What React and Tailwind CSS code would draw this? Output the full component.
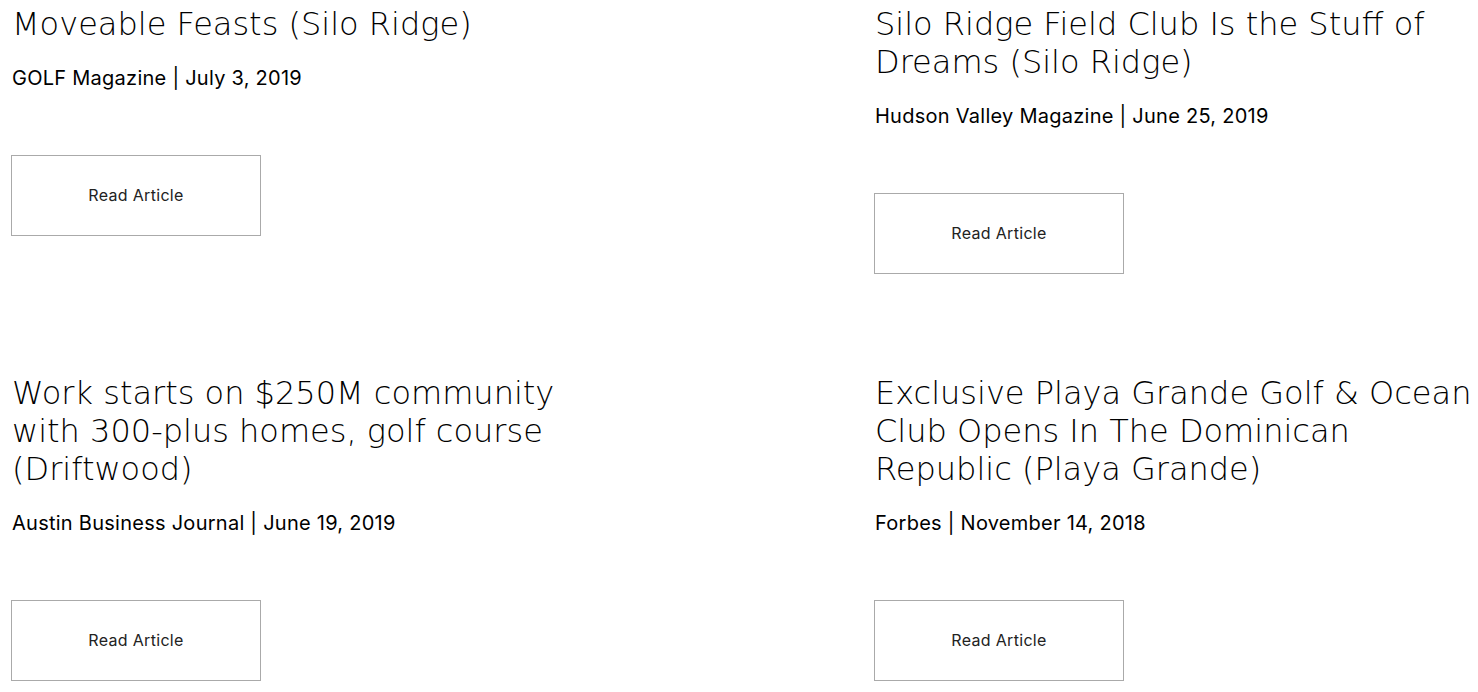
const articles = [
  {
    title: "Moveable Feasts (Silo Ridge)",
    source: "GOLF Magazine",
    date: "July 3, 2019",
  },
  {
    title: "Silo Ridge Field Club Is the Stuff of Dreams (Silo Ridge)",
    source: "Hudson Valley Magazine",
    date: "June 25, 2019",
  },
  {
    title: "Work starts on $250M community with 300-plus homes, golf course (Driftwood)",
    source: "Austin Business Journal",
    date: "June 19, 2019",
  },
  {
    title: "Exclusive Playa Grande Golf & Ocean Club Opens In The Dominican Republic (Playa Grande)",
    source: "Forbes",
    date: "November 14, 2018",
  },
];

const ArticleCard = ({ title, source, date }) => {
  return (
    <div className="flex flex-col items-start">
      <h3 className="w-[606px] max-w-none pl-px text-[32px] leading-[38px] font-extralight text-black font-['DejaVu_Sans',sans-serif]">
        {title}
      </h3>
      <p className="mt-[21px] pl-px text-[20px] leading-[28px] text-black font-['Inter',sans-serif] tracking-[0.013em]">
        {source} | {date}
      </p>
      <a
        href="#"
        className="mt-[63px] flex h-[81px] w-[250px] items-center justify-center border border-[#aaaaaa] pb-px text-[16px] text-[#222] font-['Inter',sans-serif] tracking-[0.02em]">
        Read Article
      </a>
    </div>
  );
};

export default function App() {
  return (
    <div className="min-h-screen bg-white pl-[11px] pt-[5px] overflow-hidden">
      <div className="grid grid-cols-[863px_1fr] gap-y-[100px]">
        {articles.map((a) => (
          <ArticleCard key={a.title} {...a} />
        ))}
      </div>
    </div>
  );
}
